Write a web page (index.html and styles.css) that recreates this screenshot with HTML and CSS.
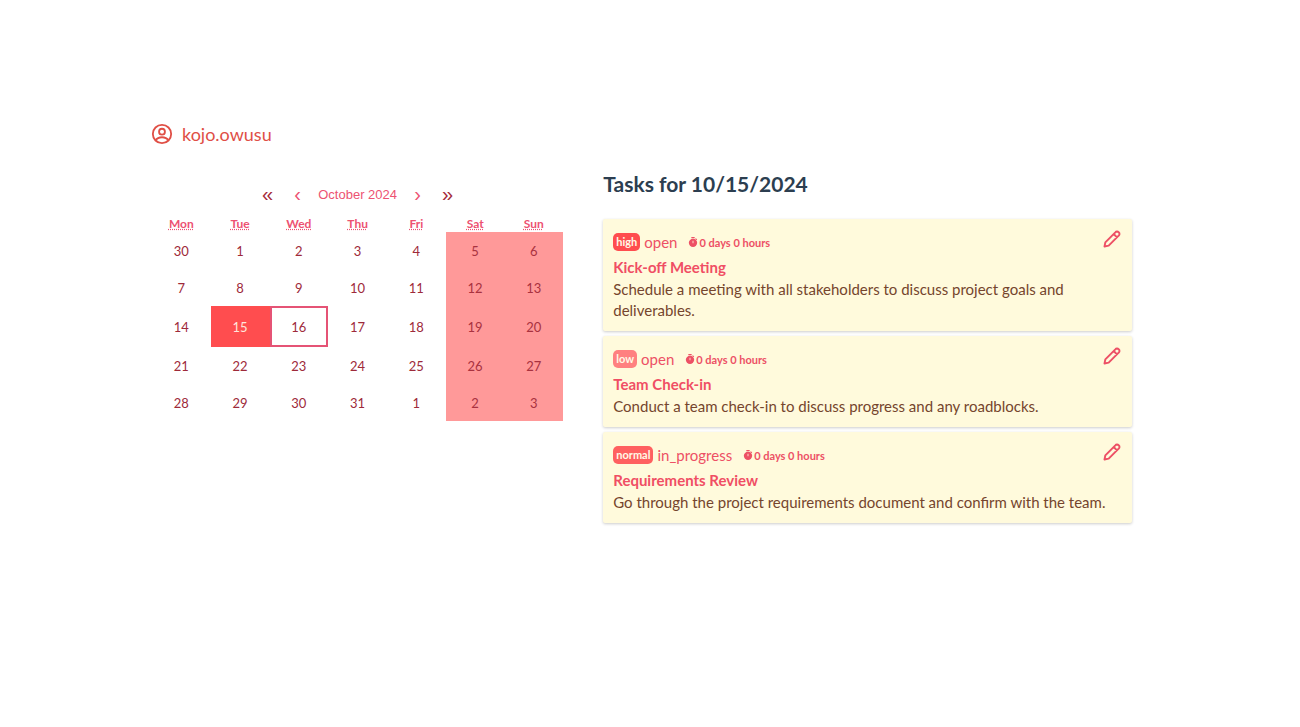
FILE: index.html
```
<!DOCTYPE html>
<html lang="en">
<head>
<meta charset="utf-8">
<meta name="viewport" content="width=device-width, initial-scale=1">
<title>Tasks</title>
<link rel="stylesheet" href="styles.css">
</head>
<body>
<svg class="sprite" aria-hidden="true">
  <symbol id="pencil" viewBox="0 0 24 24"><path d="M3 21l1-5L16 4a2.500 2.500 0 0 1 4 0a2.500 2.500 0 0 1 0 4L8 20zM14 6l4 4" fill="none" stroke="currentColor" stroke-width="2.300" stroke-linejoin="round"/></symbol>
  <symbol id="timer" viewBox="0 0 24 24"><path d="M8 0h8v3H8zM19 3l3 3-2 2-3-3z" fill="currentColor"/><circle cx="12" cy="14" r="10" fill="currentColor"/><path d="M12 9v6" stroke="#fff9db" stroke-width="2"/></symbol>
</svg>
<main class="page">
  <header class="user">
    <svg class="user-icon" viewBox="0 0 24 24" fill="none" stroke="currentColor" stroke-width="2" aria-hidden="true"><circle cx="12" cy="12" r="10"/><circle cx="12" cy="9.500" r="3.200"/><path d="M5 19c1.500-2.500 4-3.500 7-3.500s5.500 1 7 3.500"/></svg>
    <span>kojo.owusu</span>
  </header>
  <div class="columns">
    <section class="calendar" aria-label="Calendar">
      <nav class="calendar-nav">
        <button class="nav-btn year" aria-label="Previous year">«</button>
        <button class="nav-btn" aria-label="Previous month">‹</button>
        <button class="nav-label">October 2024</button>
        <button class="nav-btn" aria-label="Next month">›</button>
        <button class="nav-btn year" aria-label="Next year">»</button>
      </nav>
      <table class="month">
        <thead><tr><th><abbr title="Monday">Mon</abbr></th><th><abbr title="Tuesday">Tue</abbr></th><th><abbr title="Wednesday">Wed</abbr></th><th><abbr title="Thursday">Thu</abbr></th><th><abbr title="Friday">Fri</abbr></th><th><abbr title="Saturday">Sat</abbr></th><th><abbr title="Sunday">Sun</abbr></th></tr></thead>
        <tbody>
          <tr><td><button>30</button></td><td><button>1</button></td><td><button>2</button></td><td><button>3</button></td><td><button>4</button></td><td class="weekend"><button>5</button></td><td class="weekend"><button>6</button></td></tr>
          <tr><td><button>7</button></td><td><button>8</button></td><td><button>9</button></td><td><button>10</button></td><td><button>11</button></td><td class="weekend"><button>12</button></td><td class="weekend"><button>13</button></td></tr>
          <tr class="current"><td><button>14</button></td><td class="selected"><button>15</button></td><td class="today"><button>16</button></td><td><button>17</button></td><td><button>18</button></td><td class="weekend"><button>19</button></td><td class="weekend"><button>20</button></td></tr>
          <tr><td><button>21</button></td><td><button>22</button></td><td><button>23</button></td><td><button>24</button></td><td><button>25</button></td><td class="weekend"><button>26</button></td><td class="weekend"><button>27</button></td></tr>
          <tr><td><button>28</button></td><td><button>29</button></td><td><button>30</button></td><td><button>31</button></td><td><button>1</button></td><td class="weekend"><button>2</button></td><td class="weekend"><button>3</button></td></tr>
        </tbody>
      </table>
    </section>
    <section class="tasks">
      <h1 class="tasks-title">Tasks for 10/15/2024</h1>
      <article class="task">
        <div class="meta"><span class="badge high">high</span><span class="status">open</span><span class="time"><svg class="timer" aria-hidden="true"><use href="#timer"/></svg>0 days 0 hours</span><button class="edit" aria-label="Edit Kick-off Meeting"><svg class="pencil"><use href="#pencil"/></svg></button></div>
        <h2 class="name">Kick-off Meeting</h2>
        <p class="desc">Schedule a meeting with all stakeholders to discuss project goals and deliverables.</p>
      </article>
      <article class="task">
        <div class="meta"><span class="badge low">low</span><span class="status">open</span><span class="time"><svg class="timer" aria-hidden="true"><use href="#timer"/></svg>0 days 0 hours</span><button class="edit" aria-label="Edit Team Check-in"><svg class="pencil"><use href="#pencil"/></svg></button></div>
        <h2 class="name">Team Check-in</h2>
        <p class="desc">Conduct a team check-in to discuss progress and any roadblocks.</p>
      </article>
      <article class="task">
        <div class="meta"><span class="badge normal">normal</span><span class="status">in_progress</span><span class="time"><svg class="timer" aria-hidden="true"><use href="#timer"/></svg>0 days 0 hours</span><button class="edit" aria-label="Edit Requirements Review"><svg class="pencil"><use href="#pencil"/></svg></button></div>
        <h2 class="name">Requirements Review</h2>
        <p class="desc">Go through the project requirements document and confirm with the team.</p>
      </article>
    </section>
  </div>
</main>
</body>
</html>
```
FILE: styles.css
```
* { box-sizing: border-box; }
body { margin: 0; background: #fff; font-family: Lato, "Liberation Sans", sans-serif; }
button { margin: 0; padding: 0; border: 0; background: none; color: inherit; font: inherit; cursor: pointer; }
.sprite { display: none; }
.page { max-width: 1000px; margin: 0 auto; padding: 120px 18px 40px 2px; }
.user { display: flex; align-items: center; gap: 9px; height: 28px; color: #e04f46; font-size: 18px; line-height: 28px; }
.user-icon { width: 22px; height: 22px; margin-left: -1px; }
.columns { display: grid; grid-template-columns: 7fr 9fr; gap: 40px; align-items: start; }
.calendar { padding-top: 32px; }
.calendar-nav { display: flex; justify-content: center; align-items: center; height: 30px; color: #ed5272; }
.nav-btn { width: 30px; height: 30px; font: 20px/24px "Liberation Sans", sans-serif; padding-bottom: 2px; }
.year { color: #a52a3a; }
.nav-label { font: 13px/30px "Liberation Sans", sans-serif; width: 90px; white-space: nowrap; }
.month { width: 100%; border-collapse: collapse; table-layout: fixed; color: #9e2a3a; font-size: 13px; text-align: center; }
.month th { height: 22px; padding: 6px 0 0; color: #ed5272; font-size: 12px; line-height: 16px; font-weight: 700; }
.month abbr { text-decoration: underline dotted; }
.month td { height: 37px; padding: 0; }
.month td button { display: block; width: 100%; height: 37px; }
.month .current td, .month .current button { height: 41px; }
.month .weekend { background: #ff9999; color: #a9323f; }
.month .selected { background: #ff4d4f; color: #ffe5dc; }
.month .today button { border: 2px solid #e55375; }
.tasks-title { margin: 20px 0 19px; color: #2c3e50; font-size: 21px; line-height: 32px; font-weight: 700; }
.task { margin-bottom: 5px; padding: 10px; background: #fffadc; border-radius: 2px; box-shadow: 0 1px 3px rgba(0, 0, 0, 0.2); }
.meta { display: flex; align-items: center; height: 26px; color: #ed5065; }
.badge { height: 18px; padding: 0 3px; border-radius: 5px; color: #fff9e6; font-size: 11px; line-height: 18px; font-weight: 700; }
.high { background: #ff4d4f; }
.low { background: #ff8080; }
.normal { background: #ff6060; }
.status { margin-left: 4px; font-size: 15px; line-height: 24px; }
.time { display: flex; align-items: center; gap: 1px; margin-left: 11px; font-size: 11px; font-weight: 700; }
.timer { width: 10px; height: 10px; }
.edit { display: flex; align-self: flex-start; margin-left: auto; }
.pencil { width: 20px; height: 20px; }
.name { margin: 0; color: #f04e64; font-size: 15px; line-height: 24px; font-weight: 700; }
.desc { margin: 0; color: #75452d; font-size: 15px; line-height: 21px; }
```
